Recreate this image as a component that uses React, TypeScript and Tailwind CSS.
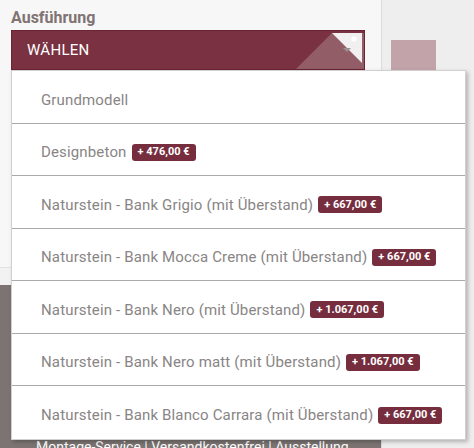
import React from "react";

const items: { label: string; price?: string }[] = [
  { label: "Grundmodell" },
  { label: "Designbeton", price: "+ 476,00 €" },
  { label: "Naturstein - Bank Grigio (mit Überstand)", price: "+ 667,00 €" },
  { label: "Naturstein - Bank Mocca Creme (mit Überstand)", price: "+ 667,00 €" },
  { label: "Naturstein - Bank Nero (mit Überstand)", price: "+ 1.067,00 €" },
  { label: "Naturstein - Bank Nero matt (mit Überstand)", price: "+ 1.067,00 €" },
  { label: "Naturstein - Bank Blanco Carrara (mit Überstand)", price: "+ 667,00 €" },
];

export default function App() {
  return (
    <div
      className="relative w-[474px] h-[448px] overflow-hidden bg-[#efeeee]"
      style={{ fontFamily: "Roboto, 'Liberation Sans', sans-serif" }}
    >
      <div className="flex h-full">
        <div className="w-[382px] h-full flex flex-col border-r border-[#dcdcdc]">
          <div className="bg-[#f7f7f7] h-[267px] px-[11px] pt-[7px]">
            <div className="text-[16px] font-bold text-[#807373] leading-[21px]">Ausführung</div>
            <div className="relative mt-[2px] h-[40px] w-[354px] bg-[#7a3242] border border-[#6a2535] flex items-center overflow-hidden">
              <span className="pl-[15px] text-white text-[15px] tracking-[0.3px]">WÄHLEN</span>
              <svg className="absolute right-0 top-0" width="80" height="40" viewBox="0 0 80 40">
                <polygon points="10,40 48,2 80,2 80,40" fill="#935d67" />
                <polygon points="48,2 78,2 78,32" fill="#f1eff0" />
                <polygon points="59,17 67,17 63,21" fill="#9b8f92" />
                <path d="M70 5 L70 11 M67 8 L73 8 M68 6 L72 10 M72 6 L68 10" stroke="#ffffff" strokeWidth="1.3" />
              </svg>
            </div>
          </div>
          <div className="h-[18px] bg-[#f3f2f2] border-t border-[#e2e2e2]" />
          <div className="flex-1 bg-[#7b7473] relative">
            <div className="absolute left-[36px] bottom-[-8px] text-white text-[14px] leading-[18px] whitespace-nowrap">
              Montage-Service | Versandkostenfrei | Ausstellung
            </div>
          </div>
        </div>
        <div className="flex-1 pt-[40px] pl-[9px]">
          <div className="w-[45px] h-[32px] bg-[#c2a3aa]" />
        </div>
      </div>

      <div className="absolute left-[11px] top-[70px] w-[455px] bg-white border border-[#d2cfcf] shadow-[2px_2px_4px_rgba(0,0,0,0.25)]">
        {items.map((it, i) => (
          <div
            key={i}
            className={`h-[52.5px] flex items-center pl-[29px] pt-[6px] ${i < items.length - 1 ? "border-b border-[#a9a9a9]" : ""}`}
          >
            <span className="text-[15px] text-[#898585] whitespace-nowrap tracking-[0.15px]">{it.label}</span>
            {it.price && (
              <span className="ml-[5px] h-[17px] px-[6px] rounded-[3px] bg-[#762e3e] text-white text-[11px] font-bold flex items-center whitespace-nowrap">
                {it.price}
              </span>
            )}
          </div>
        ))}
      </div>
    </div>
  );
}
